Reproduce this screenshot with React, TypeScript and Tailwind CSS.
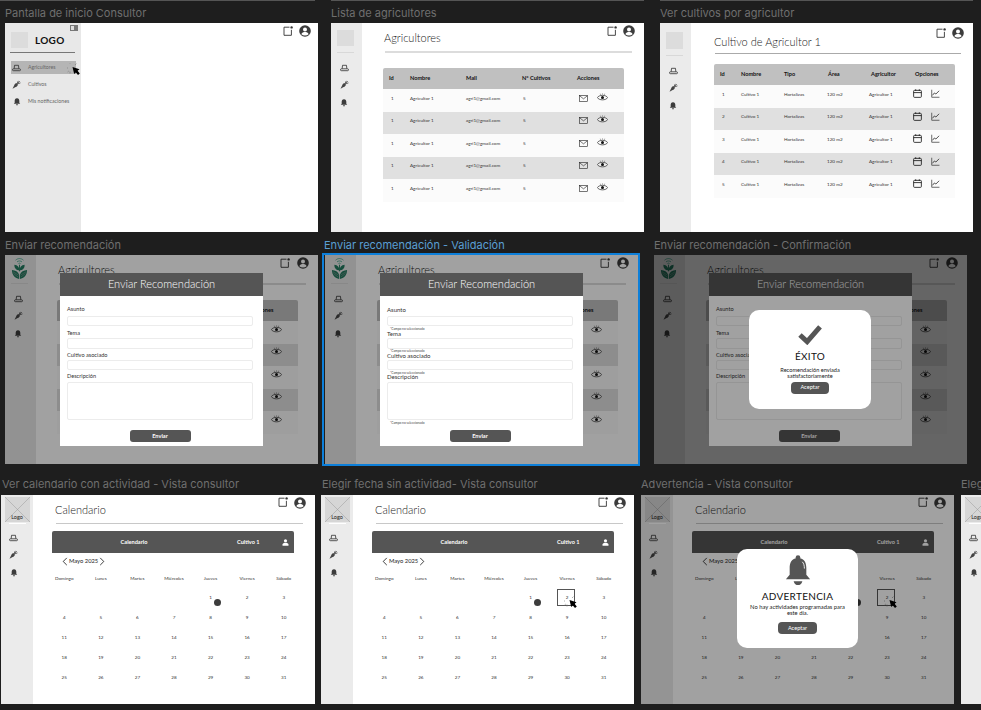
import React from "react";

const Note = ({ c = "" }: { c?: string }) => (
  <svg viewBox="0 0 10 10" className={"w-[10px] h-[10px] " + c}>
    <path d="M6.5 1.2H1V9.3H8.4V3.8" fill="none" stroke="#333" strokeWidth="0.9" />
    <circle cx="8.6" cy="1.4" r="1.2" fill="#333" />
  </svg>
);
const UserC = ({ c = "" }: { c?: string }) => (
  <svg viewBox="0 0 12 12" className={"w-[12px] h-[12px] " + c}>
    <circle cx="6" cy="6" r="5.8" fill="#3c3c3c" />
    <circle cx="6" cy="4.4" r="2" fill="#fff" />
    <path d="M2.4 9.2C3 7.6 4.6 7.1 6 7.1S9 7.6 9.6 9.2C8.6 10 7.4 10.4 6 10.4S3.4 10 2.4 9.2Z" fill="#fff" />
  </svg>
);
const Hat = () => (
  <svg viewBox="0 0 10 8" className="w-[9px] h-[8px]">
    <path d="M2.4 4.8L2.8 1H7.2L7.6 4.8" fill="none" stroke="#333" strokeWidth="0.9" />
    <rect x="0.6" y="4.9" width="8.8" height="2.1" rx="0.9" fill="none" stroke="#333" strokeWidth="0.9" />
  </svg>
);
const Carrot = () => (
  <svg viewBox="0 0 10 10" className="w-[9px] h-[9px]">
    <path d="M0.6 9.6L3 4.6C3.6 3.6 5 3.4 5.9 4.2C6.7 5 6.5 6.3 5.5 7Z" fill="#444" />
    <path d="M5.6 4L7 1M6 4.4L9.4 3.2M5.8 4.2L8.6 1.2" stroke="#444" strokeWidth="0.9" />
  </svg>
);
const BellS = () => (
  <svg viewBox="0 0 10 10" className="w-[8px] h-[9px]">
    <path d="M5 0.8C7 0.8 7.9 2.4 7.9 4.2V6.6L9 7.9H1L2.1 6.6V4.2C2.1 2.4 3 0.8 5 0.8Z" fill="#3c3c3c" />
    <rect x="3.7" y="8.4" width="2.6" height="1.2" rx="0.6" fill="#3c3c3c" />
  </svg>
);
const Mail = () => (
  <svg viewBox="0 0 10 8" className="w-[9px] h-[7px]">
    <rect x="0.5" y="0.5" width="9" height="7" fill="none" stroke="#222" strokeWidth="0.7" />
    <path d="M0.7 1L5 4.4L9.3 1" fill="none" stroke="#222" strokeWidth="0.7" />
  </svg>
);
const Eye = () => (
  <svg viewBox="0 0 11 9" className="w-[11px] h-[9px] -mt-[2px]">
    <path d="M0.4 4.6C2 1.6 9 1.6 10.6 4.6C9 7.6 2 7.6 0.4 4.6Z" fill="#fff" fillOpacity="0.4" stroke="#222" strokeWidth="0.7" />
    <circle cx="5.5" cy="4.6" r="1.5" fill="#111" />
    <path d="M5.5 0.4V1.6M3.3 0.7L3.7 1.9M7.7 0.7L7.3 1.9" stroke="#333" strokeWidth="0.45" />
  </svg>
);
const Cal = () => (
  <svg viewBox="0 0 10 10" className="w-[9px] h-[9px] -mt-px">
    <rect x="0.7" y="1.5" width="8.6" height="7.8" rx="1" fill="none" stroke="#111" strokeWidth="0.9" />
    <path d="M0.7 4H9.3M3 0.3V2M7 0.3V2" stroke="#111" strokeWidth="0.9" />
  </svg>
);
const Chart = () => (
  <svg viewBox="0 0 10 10" className="w-[9px] h-[9px] -mt-px">
    <path d="M0.8 0.8V9.2H9.4" fill="none" stroke="#333" strokeWidth="0.8" />
    <path d="M1.6 7L3.8 4.4L5.4 5.6L9 2" fill="none" stroke="#111" strokeWidth="0.8" />
  </svg>
);
const Person = () => (
  <svg viewBox="0 0 8 8" className="w-[7px] h-[7px]">
    <circle cx="4" cy="2" r="1.8" fill="#fff" />
    <path d="M0.6 7.8V6.4C0.6 5 2.4 4.4 4 4.4S7.4 5 7.4 6.4V7.8Z" fill="#fff" />
  </svg>
);
const Cursor = ({ c = "" }: { c?: string }) => (
  <svg viewBox="0 0 14 14" className={"absolute w-[14px] h-[14px] " + c}>
    <path d="M3 1.6V1M3 9.5V11.5M8 3L9.4 1.6M1 6H0M0.6 10L1.8 9" stroke="#777" strokeWidth="0.6" />
    <path d="M5.5 5L12.5 7.2L10.6 8.8L12.8 11.4L11 13L8.8 10.4L7.2 12Z" fill="#000" />
  </svg>
);
const Plant = () => (
  <svg viewBox="0 0 18 24" className="w-[17px] h-[23px]">
    <path d="M4.8 3.2C7.4 0.9 10.6 0.9 13.2 3.2M6.4 5C8 3.7 10 3.7 11.6 5M7.9 6.8C8.6 6.2 9.4 6.2 10.1 6.8" fill="none" stroke="#45a98d" strokeWidth="0.9" />
    <path d="M9 14C9 10.6 7 8.4 3.6 8C3.4 11.4 5.4 14 9 14Z" fill="#237a60" />
    <path d="M9 14C9 10.6 11 8.4 14.4 8C14.6 11.4 12.6 14 9 14Z" fill="#237a60" />
    <path d="M9 8V15" stroke="#237a60" strokeWidth="1" />
    <path d="M1 13.6C4.6 13.8 7.6 15.4 8.6 18.6C8.6 20 8.6 21.5 8.6 23C4.4 22.6 1 19 1 13.6Z" fill="#237a60" />
    <path d="M17 13.6C13.4 13.8 10.4 15.4 9.4 18.6C9.4 20 9.4 21.5 9.4 23C13.6 22.6 17 19 17 13.6Z" fill="#237a60" />
    <path d="M2.6 17.4L7.6 21M2 15.4L8 19M15.4 17.4L10.4 21M16 15.4L10 19" stroke="#8c9a94" strokeWidth="0.6" />
  </svg>
);

function SideIcons({ c = "" }: { c?: string }) {
  return (
    <div className={"flex flex-col items-center " + c}>
      <div className="h-[10px] flex items-center"><Hat /></div>
      <div className="h-[10px] flex items-center mt-[6px]"><Carrot /></div>
      <div className="h-[10px] flex items-center mt-[8px]"><BellS /></div>
    </div>
  );
}

function SideBox({ top = "pt-[7px]", h = "h-[16px]" }: { top?: string; h?: string }) {
  return (
    <div className={"w-[31px] shrink-0 pr-[3px] bg-[#ebebeb] flex flex-col items-center " + top}>
      <div className={"w-[17px] bg-[#dcdcdc] " + h} />
      <div className="w-[17px] h-px bg-[#d8d8d8] mt-[6px]" />
      <SideIcons c="mt-[10px] mr-[2px]" />
    </div>
  );
}
function SidePlant() {
  return (
    <div className="w-[31px] shrink-0 pr-[3px] bg-[#e8e8e8] flex flex-col items-center pt-[2px]">
      <Plant />
      <div className="w-[17px] h-px bg-[#d8d8d8] mt-[3px]" />
      <SideIcons c="mt-[10px] mr-[2px]" />
    </div>
  );
}
function SideX() {
  return (
    <div className="w-[32px] shrink-0 bg-[#ebebeb] flex flex-col items-center pt-[2px]">
      <div className="relative w-[25px] h-[25px] bg-[#d6d6d6] overflow-hidden">
        <svg viewBox="0 0 25 25" className="absolute inset-0 w-[25px] h-[25px]">
          <path d="M0 0L25 25M25 0L0 25" stroke="#9a9a9a" strokeWidth="0.5" />
        </svg>
        <div className="absolute left-0 right-0 top-[17px] text-center text-[5.5px] leading-[7px] text-[#222]">Logo</div>
      </div>
      <div className="w-[17px] h-px bg-white mt-px" />
      <SideIcons c="mt-[9px] mr-[7px]" />
    </div>
  );
}

function TopIcons({ note, user }: { note: string; user: string }) {
  return (
    <>
      <Note c={"absolute " + note} />
      <UserC c={"absolute " + user} />
    </>
  );
}

function Farmers({ plant = false }: { plant?: boolean }) {
  const hd = ["Id", "Nombre", "Mail", "N° Cultivos", "Acciones"];
  return (
    <div className="relative flex w-full h-full bg-white">
      {plant ? <SidePlant /> : <SideBox />}
      <div className="flex-1 flex flex-col">
        <div className="h-[28px] pl-[22px] pt-[3px] flex items-center text-[11px] font-light text-[#222]">Agricultores</div>
        <div className="ml-[23px] w-[247px] h-[2px] bg-[#dcdcdc]" />
        <div className="ml-[21px] mt-[15px] w-[241px]">
          <div className="h-[21px] bg-[#c0c0c0] rounded-t-[2px] pl-[6px] grid grid-cols-[21px_56px_56px_55px_47px] items-center text-[5.6px] font-bold text-[#111]">
            {hd.map((h) => <div key={h}>{h}</div>)}
          </div>
          {[0, 1, 2, 3, 4].map((i) => (
            <div key={i} className={"h-[22.5px] pl-[6px] pb-[4px] grid grid-cols-[21px_56px_56px_55px_47px] items-center text-[4.6px] text-[#333] " + (i % 2 ? "bg-[#e0e0e0]" : "bg-[#fbfbfb]")}>
              <div className="pl-[2px]">1</div>
              <div>Agricultor 1</div>
              <div>agri1@gmail.com</div>
              <div className="pl-px">5</div>
              <div className="flex items-center gap-[9px] pl-[2px]"><Mail /><Eye /></div>
            </div>
          ))}
        </div>
      </div>
      <TopIcons note={plant ? "left-[275px] top-[3px]" : "left-[276px] top-[3px]"} user="left-[292px] top-[2px]" />
    </div>
  );
}

function Crops() {
  const hd = ["Id", "Nombre", "Tipo", "Área", "Agricultor", "Opciones"];
  return (
    <div className="relative flex w-full h-full bg-white">
      <SideBox top="pt-[9px]" h="h-[17px]" />
      <div className="flex-1 flex flex-col">
        <div className="h-[30px] pl-[23px] pt-[9px] flex items-center text-[11px] font-light text-[#222]">Cultivo de Agricultor 1</div>
        <div className="ml-[24px] w-[246px] h-px bg-[#aaaaaa]" />
        <div className="ml-[23px] mt-[10px] w-[241px]">
          <div className="h-[21px] bg-[#c0c0c0] rounded-t-[2px] pl-[6px] grid grid-cols-[21px_43px_44px_43px_44px_1fr] items-center text-[5.6px] font-bold text-[#111]">
            {hd.map((h) => <div key={h}>{h}</div>)}
          </div>
          {[1, 2, 3, 4, 5].map((n, i) => (
            <div key={n} className={"h-[22.5px] pl-[6px] pb-[4px] grid grid-cols-[21px_43px_43px_42px_44px_1fr] items-center text-[4.6px] text-[#333] " + (i % 2 ? "bg-[#e0e0e0]" : "bg-[#fbfbfb]")}>
              <div className="pl-[2px]">{n}</div>
              <div>Cultivo 1</div>
              <div>Hortalizas</div>
              <div>120 m2</div>
              <div>Agricultor 1</div>
              <div className="flex items-center gap-[9px]"><Cal /><Chart /></div>
            </div>
          ))}
        </div>
      </div>
      <TopIcons note="left-[276px] top-[5px]" user="left-[292px] top-[4px]" />
    </div>
  );
}

const Err = ({ c }: { c: string }) => (
  <div className={"absolute left-[2px] text-[3.2px] leading-[4px] text-[#444] whitespace-nowrap " + c}>*Campo no seleccionado</div>
);

function Modal({ errors = false }: { errors?: boolean }) {
  const lab = "h-[7px] flex items-center text-[#333] " + (errors ? "text-[6px]" : "text-[5.6px]");
  const inp = "relative border border-[#ececec] rounded-[2px] bg-white ";
  return (
    <div className="absolute left-[55px] top-[18px] w-[203px] h-[173px] bg-white flex flex-col">
      <div className="h-[23px] bg-[#555555] flex items-center justify-center text-[11px] font-light text-white">Enviar Recomendación</div>
      <div className="flex-1 pl-[7px] pr-[10px] pt-[10px] flex flex-col">
        <div className={lab}>Asunto</div>
        <div className={inp + "mt-[3px] h-[10px]"}>{errors && <Err c="top-[10px]" />}</div>
        <div className={lab + " mt-[3.5px]"}>Tema</div>
        <div className={inp + "mt-[1.5px] h-[10.5px]"}>{errors && <Err c="top-[10px]" />}</div>
        <div className={lab + " mt-[3px]"}>Cultivo asociado</div>
        <div className={inp + "mt-[1.5px] h-[10px]"}>{errors && <Err c="top-[10px]" />}</div>
        <div className={lab + " mt-[3px]"}>Descripción</div>
        <div className={inp + "mt-[1.5px] h-[38.5px]"}>{errors && <Err c="top-[38px]" />}</div>
        <div className="mt-[10px] mx-auto w-[61px] h-[12px] rounded-[3px] bg-[#555555] flex items-center justify-center text-[5.6px] font-bold text-white">Enviar</div>
      </div>
    </div>
  );
}

const Dim = () => <div className="absolute inset-0 bg-black/[0.37]" />;

function Success() {
  return (
    <div className="absolute left-[95px] top-[55px] w-[122px] h-[99px] rounded-[10px] bg-white flex flex-col items-center pt-[14px]">
      <svg viewBox="0 0 26 22" className="w-[26px] h-[21px]">
        <path d="M2.5 11.5L10 18.5L23.5 3" fill="none" stroke="#555" strokeWidth="5.2" />
      </svg>
      <div className="mt-[6px] h-[10px] flex items-center text-[10px] tracking-[0.3px] text-[#111]">ÉXITO</div>
      <div className="mt-[6px] text-[5.6px] leading-[5.5px] text-center text-[#222] w-[80px]">Recomendación enviada satisfactoriamente</div>
      <div className="mt-[3.5px] w-[38px] h-[12px] rounded-[4px] bg-[#555555] flex items-center justify-center text-[5.6px] text-white">Aceptar</div>
    </div>
  );
}

function Warning() {
  return (
    <div className="absolute left-[96px] top-[54px] w-[121px] h-[99px] rounded-[10px] bg-white flex flex-col items-center pt-[6px]">
      <svg viewBox="0 0 26 32" className="w-[26px] h-[31px]">
        <circle cx="13" cy="2.6" r="2.4" fill="#555" />
        <path d="M13 3C20 3 21.6 8.6 21.6 13.5V20.5L25.5 25H0.5L4.4 20.5V13.5C4.4 8.6 6 3 13 3Z" fill="#555" />
        <path d="M17.4 7C19 8.6 19.6 11 19.6 14" fill="none" stroke="#fff" strokeWidth="0.9" />
        <path d="M8.5 27H17.5C16.8 29.8 15 31 13 31S9.2 29.8 8.5 27Z" fill="#555" />
      </svg>
      <div className="mt-[5px] h-[10px] flex items-center text-[10px] tracking-[0.3px] text-[#111]">ADVERTENCIA</div>
      <div className="mt-[3px] text-[5.8px] leading-[5.5px] text-center text-[#222] w-[106px]">No hay actividades programadas para este día.</div>
      <div className="mt-[7px] w-[39px] h-[12px] rounded-[4px] bg-[#555555] flex items-center justify-center text-[5.6px] text-white">Aceptar</div>
    </div>
  );
}

function Calendar({ selected = false }: { selected?: boolean }) {
  const wd = ["Domingo", "Lunes", "Martes", "Miércoles", "Jueves", "Viernes", "Sábado"];
  const cells: (number | null)[] = [null, null, null, null, ...Array.from({ length: 31 }, (_, i) => i + 1)];
  return (
    <div className="relative flex w-full h-full bg-white">
      <SideX />
      <div className="flex-1 flex flex-col">
        <div className="h-[28px] pl-[22px] pt-[2px] flex items-center text-[11px] font-light text-[#222]">Calendario</div>
        <div className="ml-[23px] w-[247px] h-px bg-[#c8c8c8]" />
        <div className="ml-[19px] mt-[7px] w-[242px] h-[22px] rounded-t-[2px] bg-[#555555] flex items-center text-[5.6px] font-bold text-white">
          <div className="ml-[67px] w-[30px] text-center">Calendario</div>
          <div className="ml-[88px] w-[24px] whitespace-nowrap">Cultivo 1</div>
          <div className="ml-[21px]"><Person /></div>
        </div>
        <div className="ml-[29px] mt-px h-[15px] flex items-center gap-[1px] text-[5.8px] text-[#222]">
          <svg viewBox="0 0 6 10" className="w-[6px] h-[9px]"><path d="M5 1L1 5L5 9" fill="none" stroke="#111" strokeWidth="0.9" /></svg>
          <span>Mayo 2025</span>
          <svg viewBox="0 0 6 10" className="w-[6px] h-[9px]"><path d="M1 1L5 5L1 9" fill="none" stroke="#111" strokeWidth="0.9" /></svg>
        </div>
        <div className="ml-[13px] w-[256px] grid grid-cols-7 h-[6px] items-center mt-[6px] text-[4.6px] text-center text-[#333]">
          {wd.map((d) => <div key={d}>{d}</div>)}
        </div>
        <div className="ml-[13px] mt-[7px] w-[256px] grid grid-cols-7 auto-rows-[19.8px] text-[4.6px] text-center text-[#333]">
          {cells.map((n, i) => (
            <div key={i} className="relative flex items-center justify-center">
              {n}
              {n === 1 && <div className="absolute left-[22px] top-[11px] w-[6.5px] h-[6.5px] rounded-full bg-[#3c3c3c]" />}
              {n === 2 && selected && (
                <>
                  <div className="absolute left-[8px] top-px w-[18px] h-[17px] border border-[#555]" />
                  <Cursor c="left-[15px] top-[7px]" />
                </>
              )}
            </div>
          ))}
        </div>
      </div>
      <TopIcons note="left-[277px] top-[2px]" user="left-[293px] top-[2px]" />
    </div>
  );
}

function Home() {
  const items: [React.ReactNode, string, string][] = [
    [<Hat />, "Agricultores", "bg-[#b5b5b5]"],
    [<Carrot />, "Cultivos", ""],
    [<BellS />, "Mis notificaciones", ""],
  ];
  return (
    <div className="relative flex w-full h-full bg-white">
      <div className="relative w-[76px] shrink-0 bg-[#e8e8e8] flex flex-col">
        <div className="absolute left-[65px] top-[2px] w-[8px] h-[6px] flex border border-[#777] bg-[#777]">
          <div className="w-[3px] bg-[#ddd]" />
        </div>
        <div className="pl-[6px] pt-[9px] flex items-center h-[25px]">
          <div className="w-[17px] h-[16px] bg-[#dcdcdc]" />
          <div className="ml-[7px] text-[10px] font-bold text-[#111] tracking-[0.3px]">LOGO</div>
        </div>
        <div className="ml-[5px] mt-[4px] w-[65px] h-px bg-[#777]" />
        <div className="mt-[8px] ml-[6px] w-[65px] flex flex-col">
          {items.map(([ic, t, bg], i) => (
            <div key={t} className={"h-[13px] flex items-center " + bg + (i ? " mt-[4px]" : "")}>
              <div className="w-[11px] ml-0 flex justify-center">{ic}</div>
              <div className="ml-[6px] text-[5.2px] text-[#666] whitespace-nowrap">{t}</div>
            </div>
          ))}
        </div>
        <Cursor c="left-[62px] top-[39px]" />
      </div>
      <div className="flex-1" />
      <TopIcons note="left-[278px] top-[3px]" user="left-[294px] top-[2px]" />
    </div>
  );
}

const Label = ({ c, children }: { c: string; children: React.ReactNode }) => (
  <div className={"absolute h-[14px] flex items-center whitespace-nowrap text-[11px] font-['Inter',sans-serif] " + c}>{children}</div>
);

const frame = "absolute w-[313px] h-[209px] overflow-hidden font-['Lato',sans-serif] ";
const grey = "text-[#6f6f6f] ";

export default function App() {
  return (
    <div className="relative w-[981px] h-[710px] overflow-hidden bg-[#1e1e1e]">
      <div className="absolute left-0 top-0 w-[315px] h-px bg-[#555]" />
      <div className="absolute left-[331px] top-0 w-[313px] h-px bg-[#555]" />
      <div className="absolute left-[660px] top-0 w-[313px] h-px bg-[#555]" />

      <Label c={grey + "left-[5px] top-[6px]"}>Pantalla de inicio Consultor</Label>
      <div className={frame + "left-[5px] top-[23px]"}><Home /></div>
      <Label c={grey + "left-[331px] top-[6px]"}>Lista de agricultores</Label>
      <div className={frame + "left-[331px] top-[23px]"}><Farmers /></div>
      <Label c={grey + "left-[660px] top-[6px]"}>Ver cultivos por agricultor</Label>
      <div className={frame + "left-[660px] top-[23px]"}><Crops /></div>

      <Label c={grey + "left-[5px] top-[238px]"}>Enviar recomendación</Label>
      <div className={frame + "left-[5px] top-[255px] h-[208px]"}>
        <Farmers plant /><Dim /><Modal />
      </div>
      <Label c="left-[324px] top-[238px] text-[#5a9fd4]">Enviar recomendación - Validación</Label>
      <div className="absolute left-[322px] top-[253px] w-[318px] h-[213px] border-2 border-[#0d7fd9]" />
      <div className={frame + "left-[325px] top-[255px] h-[208px]"}>
        <Farmers plant /><Dim /><Modal errors />
      </div>
      <Label c={grey + "left-[654px] top-[238px]"}>Enviar recomendación - Confirmación</Label>
      <div className={frame + "left-[654px] top-[255px] h-[208px]"}>
        <Farmers plant /><Dim /><Modal /><Dim /><Success />
      </div>

      <Label c={grey + "left-[2px] top-[477px]"}>Ver calendario con actividad - Vista consultor</Label>
      <div className={frame + "left-[1px] top-[495px] w-[314px] h-[208px]"}><Calendar /></div>
      <Label c={grey + "left-[322px] top-[477px]"}>Elegir fecha sin actividad- Vista consultor</Label>
      <div className={frame + "left-[321px] top-[495px] h-[208px]"}><Calendar selected /></div>
      <Label c={grey + "left-[641px] top-[477px]"}>Advertencia - Vista consultor</Label>
      <div className={frame + "left-[641px] top-[495px] h-[208px]"}>
        <Calendar selected /><Dim /><Warning />
      </div>
      <Label c={grey + "left-[961px] top-[477px]"}>Elegir fecha con actividad - Vista consultor</Label>
      <div className={frame + "left-[961px] top-[495px] h-[208px]"}><Calendar /></div>
    </div>
  );
}
